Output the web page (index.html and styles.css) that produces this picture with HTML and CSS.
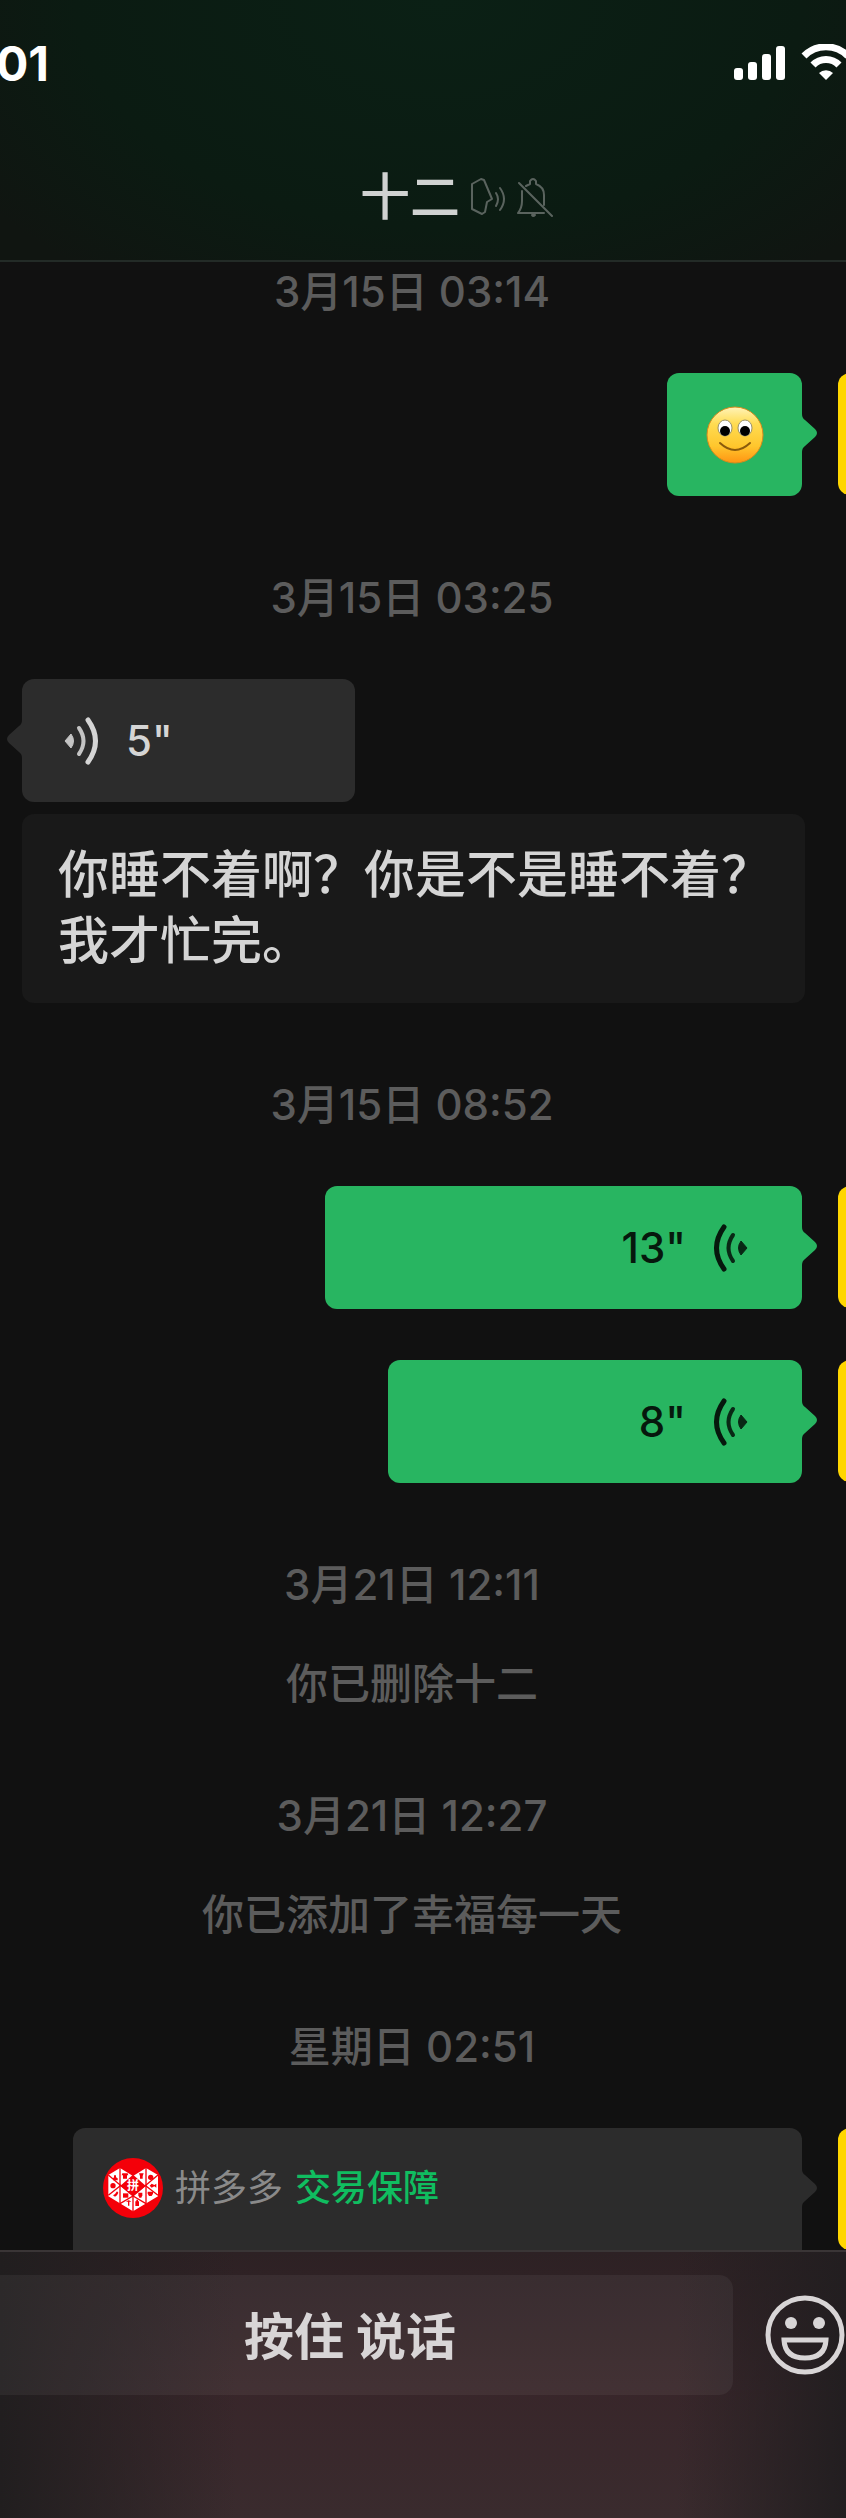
FILE: index.html
```
<!DOCTYPE html>
<html lang="zh-CN">
<head>
    <meta charset="UTF-8">
    <meta name="viewport" content="width=device-width, initial-scale=1">
    <title>十二</title>
    <link rel="stylesheet" href="styles.css">
</head>
<body>
    <svg class="defs" width="0" height="0" aria-hidden="true">
        <symbol id="voice" viewBox="0 0 36 48">
            <path d="M1 24 L7 17 Q12 24 7 31 Z" fill="currentColor" stroke="currentColor" stroke-width="1" stroke-linejoin="round" opacity=".9"/>
            <path d="M15 11 Q24 24 15 37" fill="none" stroke="currentColor" stroke-width="4" stroke-linecap="round" opacity=".9"/>
            <path d="M24 3 Q39 24 24 45" fill="none" stroke="currentColor" stroke-width="5" stroke-linecap="round"/>
        </symbol>
        <symbol id="tail" viewBox="0 0 16 38">
            <path d="M0 0 Q0 4 3 6 L13 15 Q17 19 13 23 L3 32 Q0 34 0 38 Z" fill="currentColor"/>
        </symbol>
    </svg>

    <header>
        <div class="status">
            <span class="clock">01</span>
            <svg class="status-icons" width="118" height="40" viewBox="0 0 118 40" fill="#fff">
                <rect x="0" y="24" width="9" height="12" rx="3"/>
                <rect x="14" y="18" width="9" height="18" rx="3"/>
                <rect x="28" y="10" width="9" height="26" rx="3"/>
                <rect x="42" y="2" width="9" height="34" rx="3"/>
                <g fill="none" stroke="#fff" stroke-width="7">
                    <path d="M70 12 A31 31 0 0 1 114 12"/>
                    <path d="M79 21 A18 18 0 0 1 105 21"/>
                </g>
                <path d="M92 36 L85 29 A10 10 0 0 1 99 29 Z"/>
            </svg>
        </div>
        <div class="title">
            <h1>十二</h1>
            <svg width="36" height="40" viewBox="0 0 36 40" fill="none" stroke="currentColor" stroke-width="2" stroke-linejoin="round" stroke-linecap="round">
                <path d="M2 7 L11 2 L14 3 L22 22 L17 25 L15 35 L12 37 L2 32 Z"/>
                <path d="M26 16 Q30 22 26 29 M30 11 Q38 22 30 33"/>
            </svg>
            <svg width="40" height="40" viewBox="0 0 40 40" fill="none" stroke="currentColor" stroke-width="2" stroke-linejoin="round" stroke-linecap="round">
                <path d="M6 14 V24 Q6 31 2 36 H28 M10 9 L14 7 V4 Q17 0 20 4 V7 Q28 10 28 18 V28 M3 6 L36 39"/>
                <path d="M16 38 Q17 40 19 38 Z" fill="currentColor"/>
            </svg>
        </div>
    </header>

    <main>
        <p class="date">3月15日 03:14</p>
        <div class="row mine">
            <div class="bubble emoji">
                <svg width="58" height="58" viewBox="0 0 58 58" role="img" aria-label="微笑">
                    <defs>
                        <linearGradient id="face" x1="0" y1="0" x2="0" y2="1">
                            <stop offset="0" stop-color="#fff3b8"/>
                            <stop offset=".3" stop-color="#ffdc52"/>
                            <stop offset=".7" stop-color="#ffc62d"/>
                            <stop offset="1" stop-color="#ff9412"/>
                        </linearGradient>
                    </defs>
                    <circle cx="29" cy="29" r="28" fill="url(#face)" stroke="#d98a1c" stroke-width="1"/>
                    <ellipse cx="19" cy="22" rx="7" ry="8" fill="#fff" stroke="#999069"/>
                    <ellipse cx="39" cy="22" rx="7" ry="8" fill="#fff" stroke="#999069"/>
                    <circle cx="19" cy="25" r="5"/>
                    <circle cx="39" cy="25" r="5"/>
                    <path d="M14 37 Q29 51 44 37" fill="none" stroke="#8a5a0c" stroke-width="2" stroke-linecap="round"/>
                </svg>
                <svg class="tail"><use href="#tail"/></svg>
            </div>
            <div class="avatar"></div>
        </div>

        <p class="date">3月15日 03:25</p>
        <div class="row">
            <button class="bubble voice">
                <svg class="wave"><use href="#voice"/></svg>
                <span>5"</span>
                <svg class="tail"><use href="#tail"/></svg>
            </button>
        </div>
        <p class="transcript">你睡不着啊？你是不是睡不着？我才忙完。</p>

        <p class="date">3月15日 08:52</p>
        <div class="row mine">
            <button class="bubble voice long">
                <svg class="wave"><use href="#voice"/></svg>
                <span>13"</span>
                <svg class="tail"><use href="#tail"/></svg>
            </button>
            <div class="avatar"></div>
        </div>
        <div class="row mine">
            <button class="bubble voice medium">
                <svg class="wave"><use href="#voice"/></svg>
                <span>8"</span>
                <svg class="tail"><use href="#tail"/></svg>
            </button>
            <div class="avatar"></div>
        </div>

        <p class="date">3月21日 12:11</p>
        <p class="notice">你已删除十二</p>
        <p class="date">3月21日 12:27</p>
        <p class="notice">你已添加了幸福每一天</p>
        <p class="date">星期日 02:51</p>
        <div class="row mine">
            <div class="bubble card">
                <div class="shop">
                    <svg width="60" height="60" viewBox="0 0 180 180">
                        <circle cx="90" cy="90" r="90" fill="#f40009"/>
                        <path d="M51 30 L16 51 V115 L90 160 L165 115 V51 L129 30 L90 54 Z" fill="#fff"/>
                        <path d="M90 50 L128 83 L90 114 L52 83 Z" fill="#f40009"/>
                        <g fill="none" stroke="#f40009" stroke-width="4">
                            <path d="M51 30 V137 M129 30 V137 M90 110 V160"/>
                            <path d="M16 51 L90 114 L165 51 M16 112 L52 83 M165 112 L128 83 M51 137 L90 114 L129 137"/>
                        </g>
                        <g fill="#f40009">
                            <path d="M33 52 h6 v6 l5 3 v6 h-14 v-6 l3 -3 Z"/>
                            <path d="M58 46 h16 l2 6 h-4 v10 h-12 v-10 h-4 Z"/>
                            <circle cx="30" cy="83" r="8"/>
                            <path d="M108 46 h14 l-3 8 v8 h-8 v-8 Z"/>
                            <circle cx="143" cy="58" r="8"/>
                            <path d="M140 83 l6 -6 l8 4 l6 -4 v12 l-6 -4 l-8 4 Z"/>
                            <path d="M30 112 l6 -4 l6 -8 l4 4 l-4 8 l-6 4 Z"/>
                            <path d="M60 106 h16 v13 h-16 Z"/>
                            <path d="M106 104 h12 v8 l-3 7 h-6 l-3 -7 Z"/>
                            <path d="M134 101 h16 v6 l-4 7 h-8 l-4 -7 Z"/>
                            <path d="M69 131 q8 -9 16 0 h-6 v12 h-4 v-12 Z"/>
                            <path d="M97 130 h3 v-5 h5 v5 h3 v14 h-11 Z"/>
                        </g>
                        <text x="90" y="96" font-size="36" font-weight="700" text-anchor="middle" fill="#fff">拼</text>
                    </svg>
                    <span>拼多多</span>
                    <span class="safe">交易保障</span>
                </div>
                <svg class="tail"><use href="#tail"/></svg>
            </div>
            <div class="avatar"></div>
        </div>
    </main>

    <footer>
        <button class="talk">按住 说话</button>
        <button class="face" aria-label="表情">
            <svg width="80" height="80" viewBox="0 0 80 80" fill="none" stroke="currentColor" stroke-width="5">
                <circle cx="40" cy="40" r="37"/>
                <circle cx="26" cy="28" r="6" fill="currentColor" stroke="none"/>
                <circle cx="54" cy="28" r="6" fill="currentColor" stroke="none"/>
                <path d="M19 45 H61 Q60 63 40 63 Q20 63 19 45 Z"/>
            </svg>
        </button>
    </footer>
</body>
</html>
```
FILE: styles.css
```
* {
    box-sizing: border-box;
}

body {
    margin: 0;
    height: 100vh;
    display: flex;
    flex-direction: column;
    overflow: hidden;
    background-color: #111;
    color: #d5d5d5;
    font-family: Inter, "Noto Sans CJK SC", sans-serif;
    font-size: 42px;
}

h1, p {
    margin: 0;
}

button {
    border: 0;
    padding: 0;
    font: inherit;
    color: inherit;
    cursor: pointer;
}

svg {
    display: block;
    flex: none;
}

.defs {
    position: absolute;
}

/* top bar */
header {
    flex: none;
    padding-top: 34px;
    padding-bottom: 25px;
    border-bottom: 2px solid #232b27;
    background: radial-gradient(ellipse 66% 135% at 52% 0, #0b2015 0%, #0b1b12 65%, #101511 100%);
}

.status {
    display: flex;
    justify-content: space-between;
    height: 60px;
    color: #fff;
    font-size: 48px;
    font-weight: 700;
    line-height: 60px;
}

.clock {
    margin-left: -4px;
}

.status-icons {
    margin-top: 10px;
    margin-right: -6px;
}

.title {
    display: flex;
    justify-content: center;
    align-items: center;
    gap: 10px;
    height: 76px;
    margin-top: 65px;
    padding-left: 70px;
    color: #5a635e;
}

.title h1 {
    color: #d0d2d1;
    font-size: 50px;
    font-weight: 500;
    line-height: 76px;
}

/* messages */
main {
    flex: 1;
    min-height: 0;
    overflow: hidden;
}

.date, .notice {
    margin-top: 72px;
    padding-right: 22px;
    color: #5c5c5c;
    font-weight: 500;
    line-height: 60px;
    text-align: center;
}

.date:first-child {
    margin-top: 0;
}

.notice {
    margin-top: 39px;
}

.row {
    display: flex;
    margin-top: 51px;
    padding-left: 22px;
}

.row.mine {
    justify-content: flex-end;
    gap: 36px;
    margin-right: -112px;
}

.bubble {
    position: relative;
    height: 123px;
    border-radius: 12px;
    background-color: #2c2c2c;
}

.tail {
    position: absolute;
    top: 41px;
    left: 100%;
    width: 16px;
    height: 38px;
    color: #28b561;
}

.avatar {
    flex: none;
    width: 120px;
    height: 122px;
    border-radius: 12px;
    background-color: #ffd600;
}

.emoji {
    display: flex;
    justify-content: center;
    align-items: center;
    width: 135px;
    background-color: #28b561;
}

.voice {
    display: flex;
    align-items: center;
    gap: 26px;
    width: 333px;
    padding: 0 42px;
    font-weight: 500;
}

.wave {
    width: 36px;
    height: 48px;
}

.voice .tail {
    left: auto;
    right: 100%;
    color: #2c2c2c;
    transform: scaleX(-1);
}

.mine .voice {
    flex-direction: row-reverse;
    padding: 0 54px;
    background-color: #28b561;
    color: #06180d;
}

.mine .voice.long {
    width: 477px;
}

.mine .voice.medium {
    width: 414px;
}

.mine .wave {
    transform: scaleX(-1);
}

.mine .voice .tail {
    left: 100%;
    right: auto;
    color: #28b561;
    transform: none;
}

.transcript {
    margin: 12px 41px 0 22px;
    padding: 28px 20px 29px 36px;
    border-radius: 12px;
    background-color: #191919;
    font-size: 51px;
    font-weight: 500;
    line-height: 66px;
}

.card {
    width: 729px;
    height: 260px;
    padding: 30px;
    font-size: 36px;
}

.card .tail {
    color: #2c2c2c;
}

.shop {
    display: flex;
    align-items: center;
    gap: 12px;
    color: #8a8a8a;
    line-height: 60px;
}

.safe {
    color: #10bd60;
    font-weight: 500;
}

/* input bar */
footer {
    flex: none;
    display: flex;
    align-items: flex-start;
    gap: 32px;
    height: 268px;
    padding-top: 23px;
    border-top: 2px solid #3a3536;
    background:
        linear-gradient(to right, #211e1f 0%, rgba(33, 30, 31, 0) 28%, rgba(33, 30, 31, 0) 80%, #221e20 100%),
        linear-gradient(to bottom, #2d2124 0%, #38262a 50%, #3a2b2e 100%);
}

.talk {
    flex: 1;
    height: 120px;
    margin-left: -33px;
    padding-bottom: 4px;
    border-radius: 14px;
    background-color: rgba(255, 255, 255, 0.05);
    color: #d8d5d6;
    font-size: 50px;
    font-weight: 700;
}

.face {
    flex: none;
    margin-top: 20px;
    margin-right: 1px;
    background: none;
    color: #d8d5d6;
}
```
